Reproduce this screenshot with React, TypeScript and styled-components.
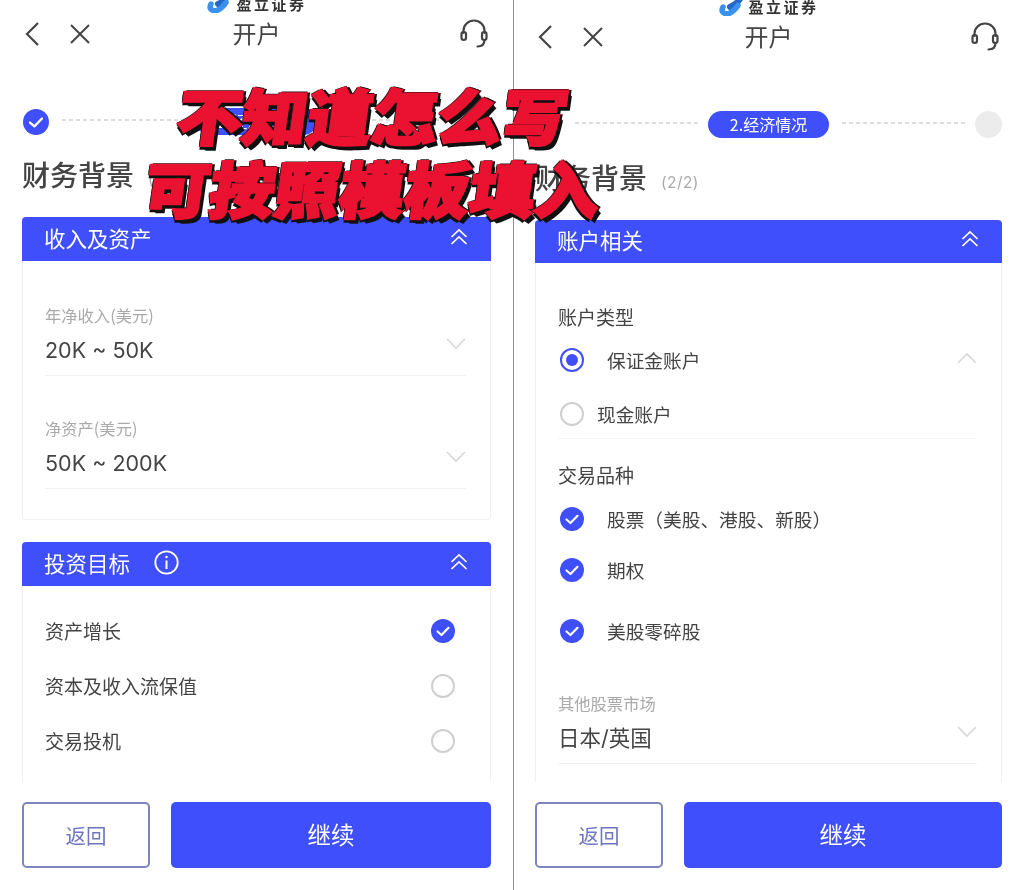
import React from 'react';
import styled, { createGlobalStyle } from 'styled-components';

const BLUE = '#3f4ffb';

const GlobalStyle = createGlobalStyle`
    html, body {
        margin: 0;
        padding: 0;
        background: #fff;
        font-family: Inter, "Noto Sans CJK SC", sans-serif;
    }
`;

const Page = styled.div`
    position: relative;
    display: grid;
    grid-template-columns: 513px 1px 510px;
    width: 1024px;
    height: 890px;
    overflow: hidden;
    background: #fff;
    filter: blur(0.45px);
`;

const Divider = styled.div`
    background: #8d8d8d;
`;

const Panel = styled.section<{ $left: number }>`
    display: flex;
    flex-direction: column;
    height: 890px;
    overflow: hidden;
    padding: 0 22px 0 ${(p) => p.$left}px;
    box-sizing: border-box;
    color: #444;
`;

const Brand = styled.div<{ $height: number }>`
    display: flex;
    flex: none;
    align-items: flex-end;
    justify-content: center;
    gap: 3px;
    box-sizing: border-box;
    height: ${(p) => p.$height}px;
    padding-bottom: 2px;
    overflow: hidden;
`;

const BrandName = styled.span`
    font: 700 15px/17px "Noto Sans CJK SC", sans-serif;
    letter-spacing: 2.5px;
    color: #333;
`;

const LogoSlot = styled.span`
    display: flex;
    margin-bottom: -1px;
`;

const Nav = styled.header`
    position: relative;
    display: flex;
    flex: none;
    align-items: center;
    height: 40px;
    gap: 28px;
    padding: 0 2px 0 1px;
`;

const NavTitle = styled.h1`
    position: absolute;
    top: 0;
    left: 0;
    right: 0;
    margin: 0;
    text-align: center;
    font: 400 24px/38px "Noto Sans CJK SC", sans-serif;
    color: #444;
`;

const HeadsetSlot = styled.span`
    display: flex;
    margin-left: auto;
`;

const Stepper = styled.div`
    display: flex;
    flex: none;
    align-items: center;
    height: 27px;
    margin-top: 54px;
`;

const Dashes = styled.div`
    flex: 1;
    height: 2px;
    margin: 0 10px 4px 13px;
    background: repeating-linear-gradient(90deg, #dcdcdc 0 4px, transparent 4px 7px);
`;

const StepPill = styled.div`
    flex: none;
    width: 121px;
    height: 27px;
    border-radius: 14px;
    background: ${BLUE};
    color: #fff;
    text-align: center;
    font: 400 16px/26px "Noto Sans CJK SC", sans-serif;
`;

const StepDot = styled.div`
    flex: none;
    width: 27px;
    height: 27px;
    border-radius: 50%;
    background: #ececec;
`;

const CheckStep = styled.span`
    display: flex;
    flex: none;
    width: 27px;
    justify-content: flex-end;
`;

const TitleRow = styled.div`
    display: flex;
    flex: none;
    align-items: flex-start;
    gap: 14px;
    height: 40px;
    margin: 21px 0;
`;

const Title = styled.h2`
    margin: 0;
    font: 500 28px/36px "Noto Sans CJK SC", sans-serif;
    color: #444;
`;

const TitleCount = styled.span`
    margin-top: 14px;
    font: 400 15.5px/20px Inter, sans-serif;
    letter-spacing: 0.4px;
    color: #aaa;
`;

const Scroll = styled.div`
    flex: 1;
    min-height: 0;
    overflow: hidden;
`;

const Card = styled.div`
    margin-bottom: 22px;
`;

const CardHeader = styled.div<{ $height: number }>`
    display: flex;
    align-items: center;
    gap: 24px;
    height: ${(p) => p.$height}px;
    padding: 0 23px 3px 22px;
    box-sizing: border-box;
    border-radius: 4px 4px 0 0;
    background: ${BLUE};
    color: #fff;
    font: 400 21.5px/1 "Noto Sans CJK SC", sans-serif;
`;

const CollapseSlot = styled.span`
    display: flex;
    margin-left: auto;
    transform: translateY(-1px);
`;

const CardBody = styled.div<{ $top: number; $bottom: number }>`
    padding: ${(p) => p.$top}px 24px ${(p) => p.$bottom}px 22px;
    border: 1px solid #f0f0f0;
    border-top: 0;
    border-radius: 0 0 4px 4px;
`;

const Field = styled.div<{ $top?: number }>`
    margin-top: ${(p) => p.$top ?? 0}px;
    padding-bottom: 8px;
    border-bottom: 1px solid #f1f1f1;
`;

const FieldLabel = styled.div`
    padding-bottom: 2px;
    font: 400 16.3px/22px "Noto Sans CJK SC", sans-serif;
    color: #aaa;
`;

const FieldValue = styled.div`
    display: flex;
    align-items: center;
    justify-content: space-between;
    margin-top: 5px;
    font: 400 21.5px/34px Inter, "Noto Sans CJK SC", sans-serif;
    color: #444;
`;

const ChevronSlot = styled.span`
    display: flex;
    transform: translateY(-6px);
`;

const OptionRow = styled.div`
    display: flex;
    align-items: center;
    justify-content: space-between;
    height: 55px;
    padding-right: 11px;
    font: 400 19px/1 "Noto Sans CJK SC", sans-serif;
    color: #444;
`;

const SectionLabel = styled.div<{ $top?: number }>`
    margin-top: ${(p) => p.$top ?? 0}px;
    font: 400 19px/28px "Noto Sans CJK SC", sans-serif;
    color: #444;
`;

const RadioList = styled.div`
    display: flex;
    flex-direction: column;
    gap: 6px;
    margin-top: 5px;
    border-bottom: 1px solid #f4f4f4;
`;

const ChoiceRow = styled.div<{ $top?: number; $gap: number }>`
    display: flex;
    align-items: center;
    gap: ${(p) => p.$gap}px;
    height: 48px;
    margin-top: ${(p) => p.$top ?? 0}px;
    padding-left: 2px;
    font: 400 18.7px/1 "Noto Sans CJK SC", sans-serif;
    color: #444;
`;

const ChoiceEnd = styled.span`
    display: flex;
    margin-left: auto;
    transform: translateY(-2px);
`;

const EmptyCircle = styled.span`
    display: block;
    flex: none;
    width: 24px;
    height: 24px;
    border: 2px solid #cfcfcf;
    border-radius: 50%;
    box-sizing: border-box;
`;

const RadioOn = styled.span`
    display: flex;
    flex: none;
    align-items: center;
    justify-content: center;
    width: 24px;
    height: 24px;
    border: 2px solid ${BLUE};
    border-radius: 50%;
    box-sizing: border-box;

    &::after {
        content: '';
        width: 12px;
        height: 12px;
        border-radius: 50%;
        background: ${BLUE};
    }
`;

const Footer = styled.footer`
    display: grid;
    flex: none;
    grid-template-columns: 128px 1fr;
    gap: 21px;
    height: 66px;
    margin: 20px 0 22px;
`;

const BackButton = styled.button`
    border: 2px solid #7f84bd;
    border-radius: 5px;
    background: #fff;
    color: #6e76c4;
    font: 400 20.5px/1 "Noto Sans CJK SC", sans-serif;
`;

const NextButton = styled.button`
    border: 0;
    border-radius: 5px;
    background: ${BLUE};
    color: #fff;
    font: 400 23.5px/1 "Noto Sans CJK SC", sans-serif;
`;

const Overlay = styled.div`
    position: absolute;
    top: 78px;
    left: -2px;
    width: 750px;
    text-align: center;
`;

const OverlayLine = styled.div`
    height: 73px;
    font: 900 65px/73px "Noto Sans CJK SC", sans-serif;
    color: #ea1230;
    white-space: nowrap;
    transform: skewX(-8deg) scaleY(0.93);
    -webkit-text-stroke: 3px #ea1230;
    text-shadow:
        1px 1px 0 #111, 2px 2px 0 #111, 3px 3px 0 #111, 4px 4px 0 #111, 5px 5px 0 #111,
        -2px 1px 0 #111, 1px -2px 0 #111, -2px -1px 0 #111, 4px -1px 0 #111, -1px 4px 0 #111;
`;

const BackIcon = () => (
    <svg width="18" height="26" viewBox="0 0 18 26" fill="none" stroke="#444" strokeWidth="2.2">
        <path d="M15 2 L4 13 L15 24" />
    </svg>
);

const CloseIcon = () => (
    <svg width="22" height="22" viewBox="0 0 22 22" fill="none" stroke="#444" strokeWidth="2">
        <path d="M2 2 L20 20 M20 2 L2 20" />
    </svg>
);

const HeadsetIcon = () => (
    <svg width="30" height="30" viewBox="0 0 30 30" fill="none" stroke="#444" strokeWidth="2.2" strokeLinecap="round">
        <path d="M4.5 14 V11.5 A10.5 10 0 0 1 25.5 11.5 V14" />
        <rect x="2.5" y="13" width="4.5" height="8" rx="2.2" />
        <rect x="23" y="13" width="4.5" height="8" rx="2.2" />
        <path d="M25.5 21 C25.5 25 23 27.5 18.5 27.5" />
    </svg>
);

const BrandLogo = () => (
    <svg width="27" height="17" viewBox="0 0 27 17" fill="none">
        <path d="M25 -6 C22 2 18 5 12 8" stroke="#2467c9" strokeWidth="6" strokeLinecap="round" />
        <path d="M5 8 C2 14 8 16 12 14 C15 12.5 18 9.5 20 6.5" stroke="#3a92ee" strokeWidth="5.5" strokeLinecap="round" />
    </svg>
);

const CheckDot = ({ size = 24 }: { size?: number }) => (
    <svg width={size} height={size} viewBox="0 0 24 24" style={{ flex: 'none' }}>
        <circle cx="12" cy="12" r="12" fill={BLUE} />
        <path d="M6.5 12.5 L10.5 16 L17.5 8.8" fill="none" stroke="#fff" strokeWidth="2.2" strokeLinecap="round" strokeLinejoin="round" />
    </svg>
);

const DoubleUp = () => (
    <svg width="18" height="18" viewBox="0 0 18 18" fill="none" stroke="#fff" strokeWidth="1.7">
        <path d="M1.5 9 L9 2 L16.5 9 M1.5 16 L9 9 L16.5 16" />
    </svg>
);

const InfoIcon = () => (
    <svg width="25" height="25" viewBox="0 0 25 25" fill="none" stroke="#fff" strokeWidth="1.8">
        <circle cx="12.5" cy="12.5" r="11.2" />
        <path d="M12.5 10.5 V19" strokeWidth="2" />
        <circle cx="12.5" cy="7" r="1.2" fill="#fff" stroke="none" />
    </svg>
);

const Chevron = ({ up }: { up?: boolean }) => (
    <svg width="20" height="12" viewBox="0 0 20 12" fill="none" stroke="#d8d8d8" strokeWidth="1.6">
        <path d={up ? 'M1 11 L10 2 L19 11' : 'M1 1 L10 10 L19 1'} />
    </svg>
);

const Chrome = ({ brandHeight, step, children }: { brandHeight: number; step: React.ReactNode; children: React.ReactNode }) => (
    <>
        <Brand $height={brandHeight}>
            <LogoSlot>
                <BrandLogo />
            </LogoSlot>
            <BrandName>盈立证券</BrandName>
        </Brand>
        <Nav>
            <NavTitle>开户</NavTitle>
            <BackIcon />
            <CloseIcon />
            <HeadsetSlot>
                <HeadsetIcon />
            </HeadsetSlot>
        </Nav>
        <Stepper>
            {step}
            <Dashes />
            <StepPill>2.经济情况</StepPill>
            <Dashes />
            <StepDot />
        </Stepper>
        <TitleRow>
            <Title>财务背景</Title>
            <TitleCount>(2/2)</TitleCount>
        </TitleRow>
        <Scroll>{children}</Scroll>
        <Footer>
            <BackButton>返回</BackButton>
            <NextButton>继续</NextButton>
        </Footer>
    </>
);

const goals = [
    { label: '资产增长', checked: true },
    { label: '资本及收入流保值', checked: false },
    { label: '交易投机', checked: false },
];

const products = [
    { label: '股票（美股、港股、新股）', top: 6 },
    { label: '期权', top: 3 },
    { label: '美股零碎股', top: 13 },
];

const App = () => (
    <Page>
        <GlobalStyle />
        <Panel $left={22}>
            <Chrome
                brandHeight={14}
                step={
                    <CheckStep>
                        <CheckDot size={26} />
                    </CheckStep>
                }
            >
                <Card>
                    <CardHeader $height={44}>
                        收入及资产
                        <CollapseSlot>
                            <DoubleUp />
                        </CollapseSlot>
                    </CardHeader>
                    <CardBody $top={43} $bottom={30}>
                        <Field>
                            <FieldLabel>年净收入(美元)</FieldLabel>
                            <FieldValue>
                                20K ~ 50K
                                <ChevronSlot>
                                    <Chevron />
                                </ChevronSlot>
                            </FieldValue>
                        </Field>
                        <Field $top={41}>
                            <FieldLabel>净资产(美元)</FieldLabel>
                            <FieldValue>
                                50K ~ 200K
                                <ChevronSlot>
                                    <Chevron />
                                </ChevronSlot>
                            </FieldValue>
                        </Field>
                    </CardBody>
                </Card>
                <Card>
                    <CardHeader $height={44}>
                        投资目标
                        <InfoIcon />
                        <CollapseSlot>
                            <DoubleUp />
                        </CollapseSlot>
                    </CardHeader>
                    <CardBody $top={17} $bottom={40}>
                        {goals.map((goal) => (
                            <OptionRow key={goal.label}>
                                {goal.label}
                                {goal.checked ? <CheckDot /> : <EmptyCircle />}
                            </OptionRow>
                        ))}
                    </CardBody>
                </Card>
            </Chrome>
        </Panel>
        <Divider />
        <Panel $left={21}>
            <Chrome brandHeight={17} step={<StepDot />}>
                <Card>
                    <CardHeader $height={43}>
                        账户相关
                        <CollapseSlot>
                            <DoubleUp />
                        </CollapseSlot>
                    </CardHeader>
                    <CardBody $top={40} $bottom={40}>
                        <SectionLabel>账户类型</SectionLabel>
                        <RadioList>
                            <ChoiceRow $gap={23}>
                                <RadioOn />
                                保证金账户
                                <ChoiceEnd>
                                    <Chevron up />
                                </ChoiceEnd>
                            </ChoiceRow>
                            <ChoiceRow $gap={13}>
                                <EmptyCircle />
                                现金账户
                            </ChoiceRow>
                        </RadioList>
                        <SectionLabel $top={22}>交易品种</SectionLabel>
                        {products.map((product) => (
                            <ChoiceRow key={product.label} $gap={23} $top={product.top}>
                                <CheckDot />
                                {product.label}
                            </ChoiceRow>
                        ))}
                        <Field $top={37}>
                            <FieldLabel>其他股票市场</FieldLabel>
                            <FieldValue>
                                日本/英国
                                <ChevronSlot>
                                    <Chevron />
                                </ChevronSlot>
                            </FieldValue>
                        </Field>
                    </CardBody>
                </Card>
            </Chrome>
        </Panel>
        <Overlay>
            <OverlayLine>不知道怎么写</OverlayLine>
            <OverlayLine>可按照模板填入</OverlayLine>
        </Overlay>
    </Page>
);

export default App;
